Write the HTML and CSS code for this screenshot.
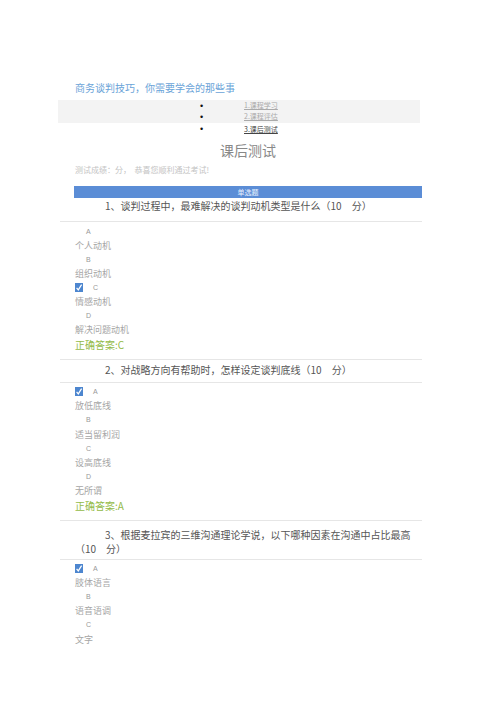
FILE: index.html
```html
<!DOCTYPE html>
<html lang="zh">
<head>
<meta charset="utf-8">
<title>课后测试</title>
<link rel="stylesheet" href="styles.css">
</head>
<body>
<div class="page">
  <div class="course-title">商务谈判技巧，你需要学会的那些事</div>
  <div class="nav-band">
    <div class="nav-item"><span class="dot">•</span><a class="nav-link">1.课程学习</a></div>
    <div class="nav-item"><span class="dot">•</span><a class="nav-link">2.课程评估</a></div>
  </div>
  <div class="nav-item"><span class="dot">•</span><a class="nav-link active">3.课后测试</a></div>
</div>
<h2 class="heading">课后测试</h2>
<div class="page">
  <div class="score">测试成绩：分，&nbsp;&nbsp;恭喜您顺利通过考试!</div>
  <div class="type-bar">单选题</div>

  <div class="q q1">1、谈判过程中，最难解决的谈判动机类型是什么（10　分）</div>
  <div class="rule"></div>
  <div class="opts">
    <div class="opt letter">A</div>
    <div class="opt">个人动机</div>
    <div class="opt letter">B</div>
    <div class="opt">组织动机</div>
    <div class="opt checked"><svg class="cb" viewBox="0 0 8 9" width="8" height="9"><rect width="8" height="9" fill="#4d86cf"/><path d="M1.6 4.8 L3.3 6.9 L6.6 1.6" stroke="#fff" stroke-width="1.2" fill="none"/></svg><span class="lt">C</span></div>
    <div class="opt">情感动机</div>
    <div class="opt letter">D</div>
    <div class="opt">解决问题动机</div>
  </div>
  <div class="answer">正确答案:C</div>
  <div class="rule"></div>

  <div class="q q2">2、对战略方向有帮助时，怎样设定谈判底线（10　分）</div>
  <div class="rule"></div>
  <div class="opts">
    <div class="opt checked"><svg class="cb" viewBox="0 0 8 9" width="8" height="9"><rect width="8" height="9" fill="#4d86cf"/><path d="M1.6 4.8 L3.3 6.9 L6.6 1.6" stroke="#fff" stroke-width="1.2" fill="none"/></svg><span class="lt">A</span></div>
    <div class="opt">放低底线</div>
    <div class="opt letter">B</div>
    <div class="opt">适当留利润</div>
    <div class="opt letter">C</div>
    <div class="opt">设高底线</div>
    <div class="opt letter">D</div>
    <div class="opt">无所谓</div>
  </div>
  <div class="answer">正确答案:A</div>
  <div class="rule"></div>

  <div class="q q3">3、根据麦拉宾的三维沟通理论学说，以下哪种因素在沟通中占比最高（10　分）</div>
  <div class="rule"></div>
  <div class="opts">
    <div class="opt checked"><svg class="cb" viewBox="0 0 8 9" width="8" height="9"><rect width="8" height="9" fill="#4d86cf"/><path d="M1.6 4.8 L3.3 6.9 L6.6 1.6" stroke="#fff" stroke-width="1.2" fill="none"/></svg><span class="lt">A</span></div>
    <div class="opt">肢体语言</div>
    <div class="opt letter">B</div>
    <div class="opt">语音语调</div>
    <div class="opt letter">C</div>
    <div class="opt">文字</div>
  </div>
</div>
</body>
</html>
```
FILE: styles.css
```css
html, body {
  margin: 0;
  padding: 0;
  background: #fff;
}
body {
  font-family: "Noto Sans CJK SC", "Liberation Serif", sans-serif;
  color: #555;
}
.page {
  margin-left: 58px;
  width: 364px;
}
.page:first-child {
  padding-top: 82px;
}
.course-title {
  padding-left: 17px;
  font-size: 10px;
  line-height: 12px;
  color: #6aa3d8;
  margin-bottom: 6px;
}
.nav-band {
  width: 362px;
  background: #f3f3f3;
  padding-bottom: 1px;
}
.nav-item {
  display: flex;
  align-items: center;
  height: 11px;
  padding-left: 142px;
  font-size: 7px;
}
.nav-band + .nav-item {
  height: 12px;
}
.dot {
  width: 44px;
  font-size: 9px;
  color: #111;
  font-family: "Liberation Sans", sans-serif;
}
.nav-link {
  color: #aaa;
  text-decoration: underline;
  line-height: 9px;
}
.nav-link.active {
  color: #444;
}
.heading {
  margin: 6px 0 0;
  text-align: center;
  font-size: 14px;
  line-height: 18px;
  font-weight: normal;
  color: #888;
}
.score {
  margin-top: 6px;
  padding-left: 17px;
  font-size: 8px;
  line-height: 10px;
  color: #c4c4c4;
}
.type-bar {
  margin: 11px 0 0 16px;
  height: 12px;
  background: #5b8dd6;
  color: #e8f0ff;
  font-size: 7px;
  line-height: 12px;
  text-align: center;
}
.q {
  padding: 3px 7px 5px 17px;
  font-size: 10px;
  line-height: 14px;
  text-indent: 30px;
  color: #555;
}
.q1 {
  padding-top: 1px;
  padding-bottom: 8px;
}
.q3 {
  padding-top: 7px;
  padding-bottom: 3px;
}
.rule {
  margin-left: 2px;
  height: 1px;
  background: #e6e6e6;
}
.opts {
  padding: 2px 0 0 17px;
}
.opt {
  display: flex;
  align-items: center;
  height: 14.1px;
  font-size: 9px;
  color: #a6a6a6;
}
.opt.letter {
  padding-left: 11px;
  font-family: "Liberation Sans", sans-serif;
  font-size: 7px;
  color: #999;
}
.cb {
  display: block;
}
.lt {
  margin-left: 10px;
  font-family: "Liberation Sans", sans-serif;
  font-size: 7px;
  color: #999;
}
.answer {
  padding-left: 17px;
  height: 16px;
  line-height: 16px;
  font-size: 10px;
  color: #93ba48;
  margin-bottom: 6px;
}
```
